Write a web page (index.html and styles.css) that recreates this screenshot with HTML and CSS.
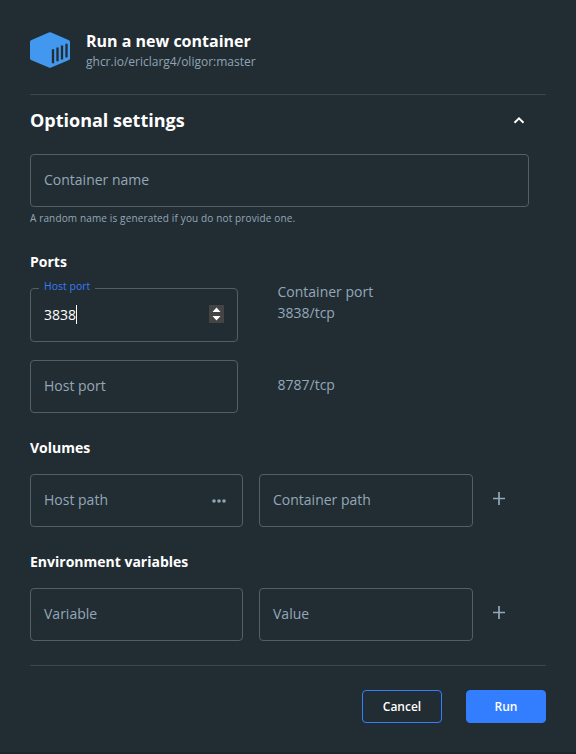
FILE: index.html
```html
<!DOCTYPE html>
<html lang="en">
<head>
<meta charset="utf-8">
<title>Run a new container</title>
<link rel="stylesheet" href="styles.css">
</head>
<body>
<main class="dialog">
  <header class="header">
    <svg class="logo" width="40" height="36" viewBox="0 0 40 36">
      <path fill="#4298ee" d="M18.8.5Q20 0 21.200.5L39 8.200Q40 8.700 40 9.700V26.500Q40 27.400 39 27.900L21.200 35.500Q20 36 18.800 35.500L1 27.900Q0 27.400 0 26.500V9.700Q0 8.700 1 8.200Z"/>
      <path stroke="#222d33" stroke-width="2.300" d="M23 17.300V31.300M27.500 15.400V29.300M32 13.500V27.400M36.500 11.700V25.600"/>
    </svg>
    <div>
      <h1 class="title">Run a new container</h1>
      <p class="image">ghcr.io/ericlarg4/oligor:master</p>
    </div>
  </header>
  <section class="settings">
    <div class="accordion">
      <h2 class="heading">Optional settings</h2>
      <svg class="chevron" width="12" height="8" viewBox="0 0 12 8"><path fill="none" stroke="#fff" stroke-width="2" d="M1.500 6.800 6 2.300l4.500 4.500"/></svg>
    </div>
    <div class="field name">Container name</div>
    <p class="hint">A random name is generated if you do not provide one.</p>

    <h3 class="group">Ports</h3>
    <div class="row port-row">
      <div class="field port active">
        <span class="label">Host port</span>
        <span class="value">3838</span><span class="caret"></span>
        <svg class="spinner" width="15" height="18" viewBox="0 0 15 18"><path fill="#444" d="M0 0h15v18H0z"/><path fill="#fff" d="M7.500 2.500 11.500 7h-8zM7.500 15.500 3.500 11h8z"/></svg>
      </div>
      <div class="target">Container port<br>3838/tcp</div>
    </div>
    <div class="row second-port">
      <div class="field port">Host port</div>
      <div class="target single">8787/tcp</div>
    </div>

    <h3 class="group volumes">Volumes</h3>
    <div class="row pair">
      <div class="field">Host path
        <svg class="dots" width="14" height="4" viewBox="0 0 14 4" fill="#8fa4b5"><circle cx="2" cy="2" r="1.800"/><circle cx="7" cy="2" r="1.800"/><circle cx="12" cy="2" r="1.800"/></svg>
      </div>
      <div class="field">Container path</div>
      <svg class="plus" width="12" height="13" viewBox="0 0 12 13"><path stroke="#94a7b8" stroke-width="1.700" d="M6 0v13M0 6.500h12"/></svg>
    </div>

    <h3 class="group variables">Environment variables</h3>
    <div class="row pair">
      <div class="field">Variable</div>
      <div class="field">Value</div>
      <svg class="plus" width="12" height="13" viewBox="0 0 12 13"><path stroke="#94a7b8" stroke-width="1.700" d="M6 0v13M0 6.500h12"/></svg>
    </div>
  </section>
  <footer class="footer">
    <button class="button outline">Cancel</button>
    <button class="button primary">Run</button>
  </footer>
</main>
</body>
</html>
```
FILE: styles.css
```css
* { box-sizing: border-box; }
body {
  margin: 0;
  background: #222d33;
  color: #fff;
  font: 14px/21px "Open Sans", sans-serif;
}
h1, h2, h3, p { margin: 0; }
svg { display: block; flex: none; }
.dialog { height: 754px; padding: 0 30px; border-bottom: 2px solid #1d262d; }
.header {
  display: flex;
  gap: 16px;
  height: 95px;
  padding-top: 30px;
  border-bottom: 1px solid #3c474c;
}
.logo { margin-top: 2px; }
.title { font-size: 16px; line-height: 22px; font-weight: 700; }
.image { font-size: 12px; line-height: 20px; color: #8fa4b5; }
.settings { height: 571px; border-bottom: 1px solid #3c474c; }
.accordion {
  display: flex;
  align-items: center;
  justify-content: space-between;
  height: 50px;
  padding-right: 21px;
}
.heading { font-size: 18px; line-height: 26px; font-weight: 700; }
.field {
  position: relative;
  display: flex;
  align-items: center;
  height: 53px;
  padding: 0 13px 2px;
  border: 1px solid #545f64;
  border-radius: 4px;
  color: #94a7b8;
}
.name { width: 499px; margin-top: 9px; }
.hint { margin-top: 3px; font-size: 10px; line-height: 16px; letter-spacing: .14px; color: #94a7b8; }
.group { margin-top: 26px; font-size: 14px; line-height: 20px; font-weight: 700; }
.row { display: flex; }
.port-row { margin-top: 16px; }
.port { width: 208px; }
.active { height: 54px; color: #fff; }
.label {
  position: absolute;
  top: -11px;
  left: 8px;
  width: 56px;
  padding-left: 5px;
  background: #222d33;
  color: #347cf5;
  font-size: 10.5px;
  line-height: 16px;
  white-space: nowrap;
}
.caret { width: 1px; height: 19px; background: #fff; }
.spinner { margin: 0 0 0 auto; }
.target { margin: -7px 0 0 39.5px; color: #94a7b8; }
.single { margin-top: 14px; }
.second-port { margin-top: 18px; }
.volumes { margin-top: 25px; }
.variables { margin-top: 25px; }
.pair {
  display: grid;
  grid-template-columns: 213px 214px 12px;
  column-gap: 16px;
  margin-top: 16px;
}
.dots { margin: 2px 3px 0 auto; }
.plus { margin: 18px 0 0 4px; }
.footer { display: flex; justify-content: flex-end; gap: 24px; padding-top: 24px; }
.button {
  width: 80px;
  height: 33px;
  padding: 0;
  border: 1px solid #337eff;
  border-radius: 4px;
  color: #fff;
  font: 600 12px/18px "Open Sans", sans-serif;
}
.outline { background: transparent; }
.primary { background: #337eff; }
```
